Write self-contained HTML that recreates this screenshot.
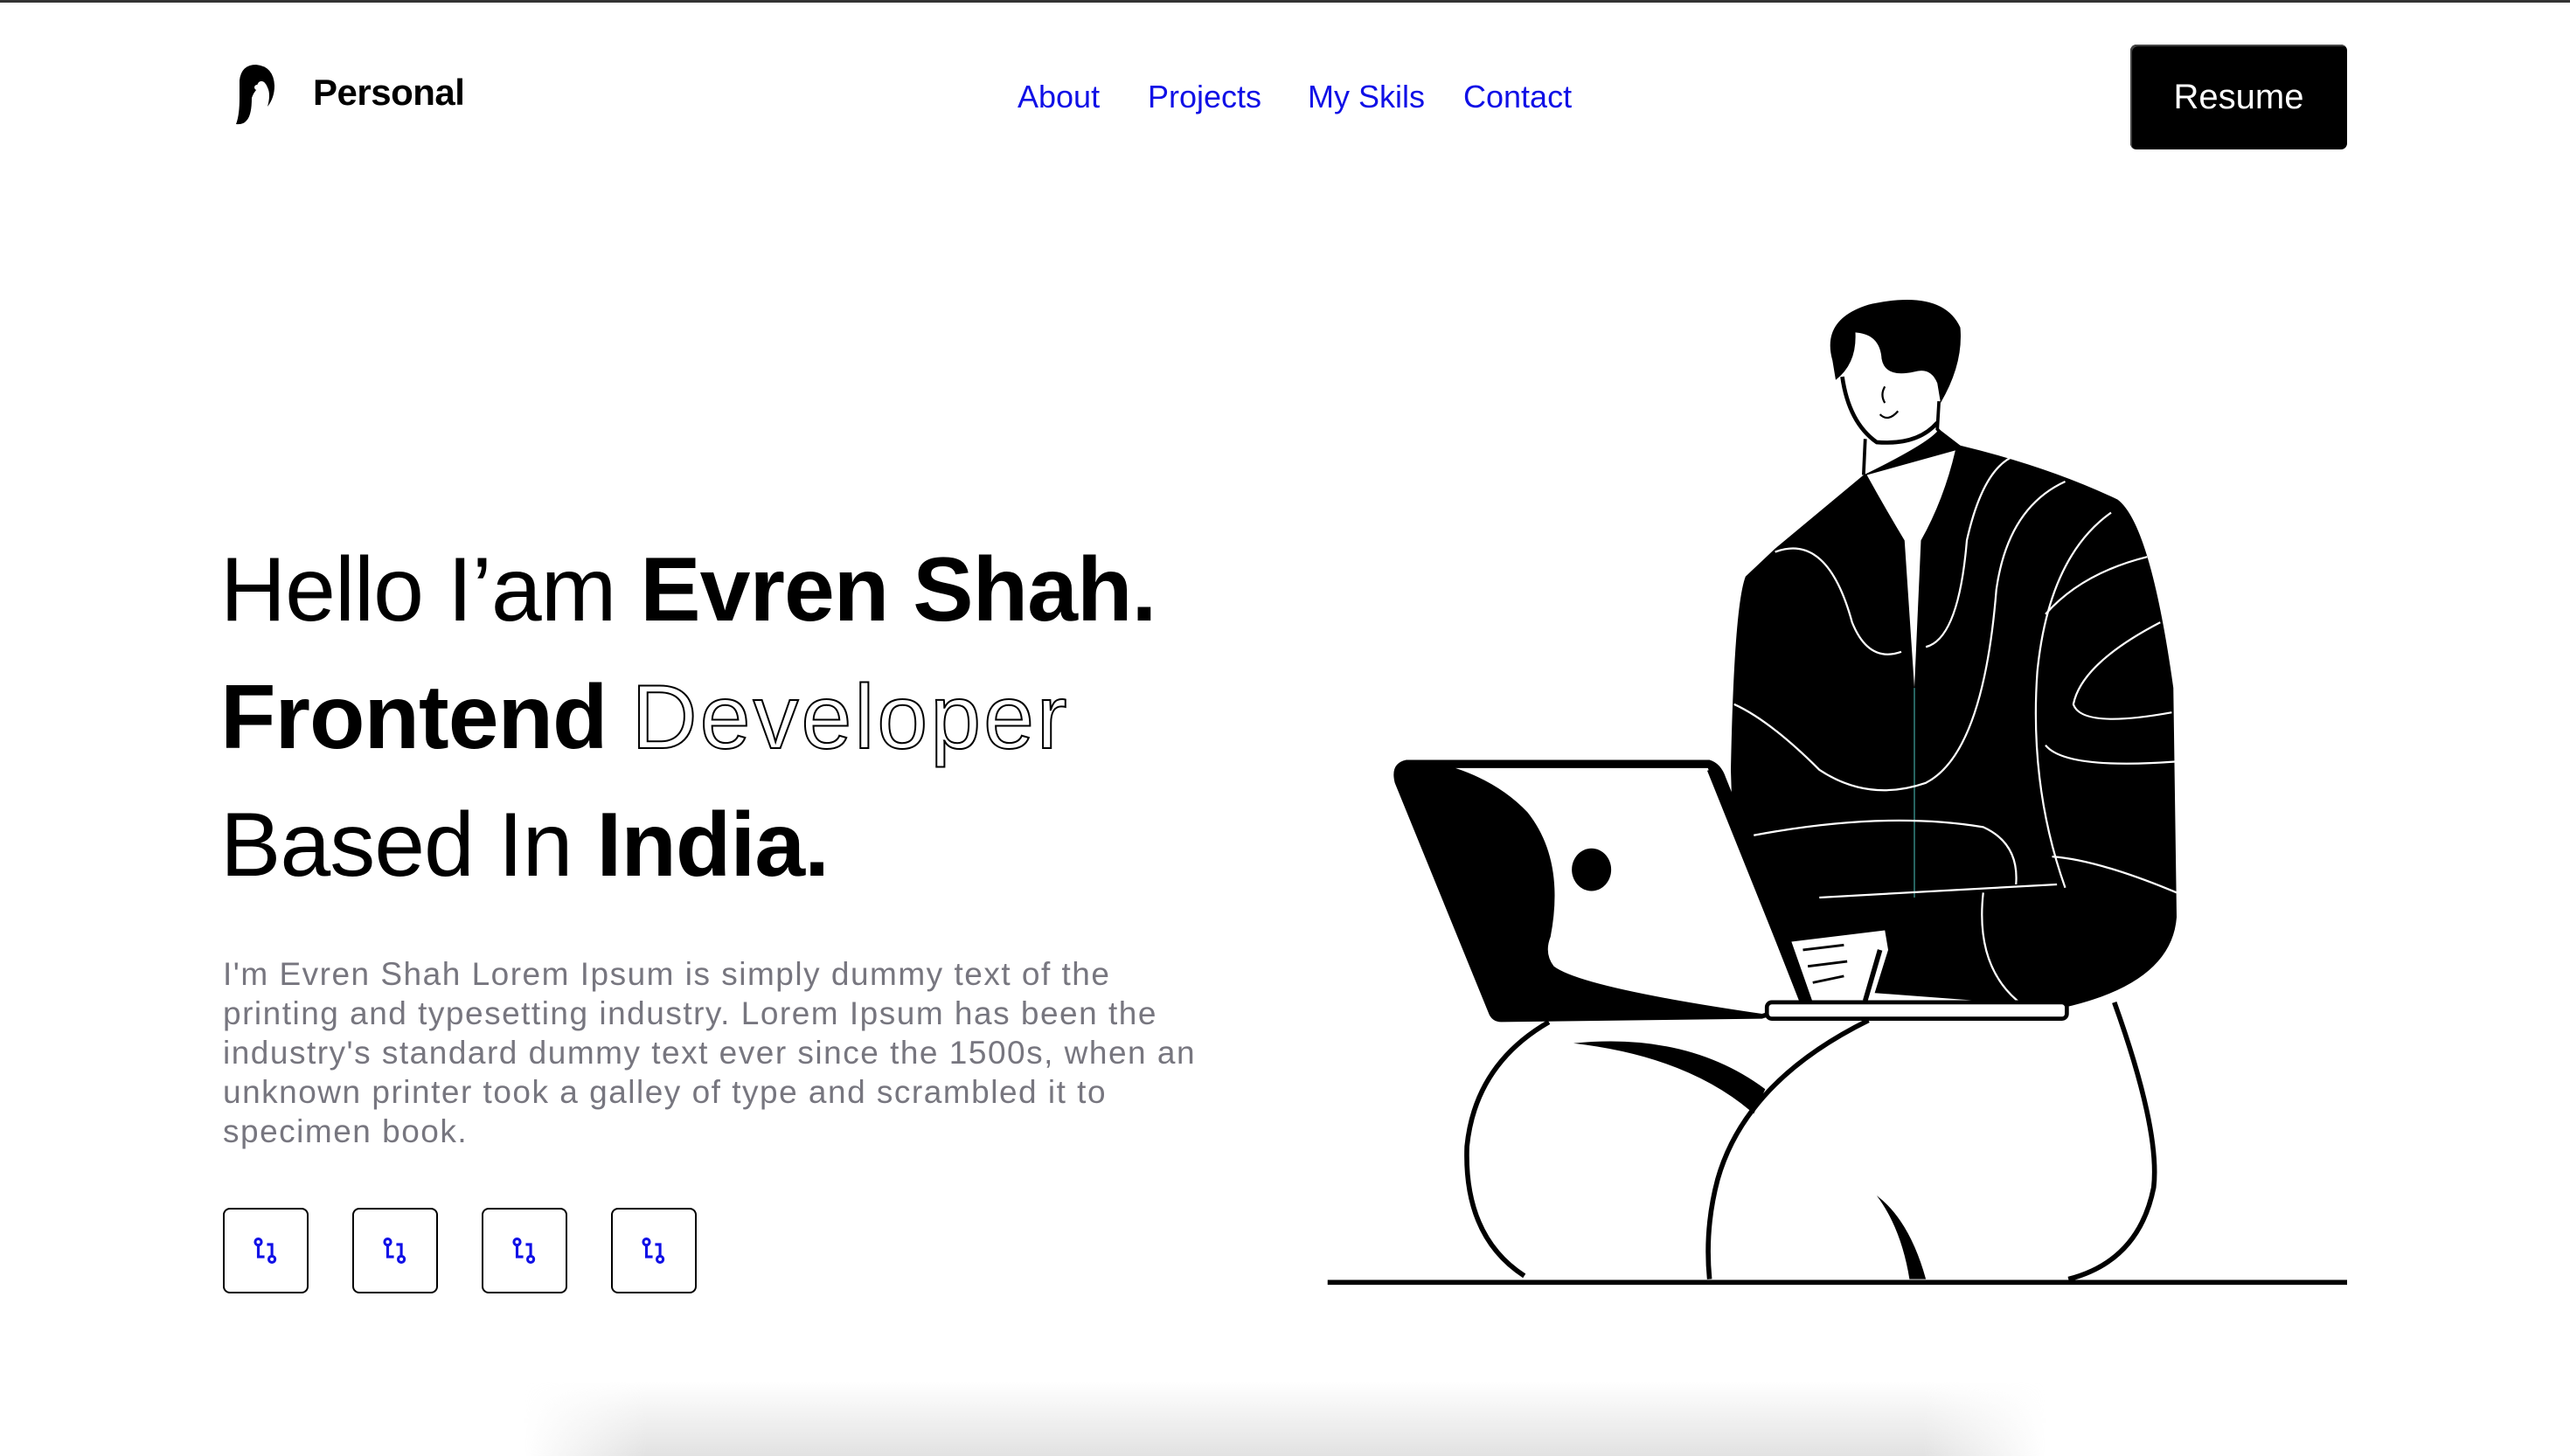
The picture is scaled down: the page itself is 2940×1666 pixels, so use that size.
<!DOCTYPE html>
<html><head><meta charset="utf-8"><style>
html,body{margin:0;padding:0;overflow:hidden;width:2940px;height:1666px;}
body{background:#fff;font-family:"Liberation Sans",sans-serif;}
#w{position:relative;width:2940px;height:1666px;overflow:hidden;}
.topline{position:absolute;left:0;top:0;width:2940px;height:3px;background:#333;}
.logo{position:absolute;left:358px;top:82px;font-size:42px;font-weight:bold;color:#000;letter-spacing:-0.5px;}
.nav a{position:absolute;top:90px;font-size:36px;color:#1010e6;text-decoration:none;}
.resume{position:absolute;left:2437px;top:51px;width:248px;height:120px;background:#000;border-radius:7px;box-shadow:inset 2px 2px 0 #444;color:#fff;font-size:40px;display:flex;align-items:center;justify-content:center;}
h1{position:absolute;left:252px;top:602px;margin:0;font-size:104px;line-height:146px;font-weight:normal;color:#000;letter-spacing:-1px;white-space:nowrap;}
h1 b{font-weight:bold;}
.out{color:#fff;-webkit-text-stroke:2px #000;letter-spacing:3px;}
p{position:absolute;left:255px;top:1092px;margin:0;font-size:37px;line-height:45px;color:#77767f;white-space:nowrap;letter-spacing:1.5px;}
.soc{position:absolute;top:1382px;width:98px;height:98px;border:2px solid #000;border-radius:8px;box-sizing:border-box;display:flex;align-items:center;justify-content:center;}
.shadow{position:absolute;left:600px;top:1580px;width:1740px;height:86px;background:linear-gradient(to bottom,rgba(220,220,220,0),#e2e2e2);-webkit-mask-image:linear-gradient(to right,transparent,#000 8%,#000 92%,transparent);mask-image:linear-gradient(to right,transparent,#000 8%,#000 92%,transparent);}
</style></head><body><div id="w">
<div class="topline"></div>
<svg style="position:absolute;left:268px;top:72px" width="50" height="72" viewBox="0 0 50 72">
<path d="M2,70 Q6,60 6,40 L6,20 Q8,2 25,2 Q45,4 46,26 Q46,40 38,50 Q42,36 38,28 Q34,18 28,22 Q24,28 26,30 Q22,34 20,40 Q20,60 14,66 Q10,71 2,70 Z" fill="#000"/>
<circle cx="26" cy="28" r="3" fill="#fff"/>
</svg>
<div class="logo">Personal</div>
<div class="nav"><a style="left:1164px">About</a><a style="left:1313px">Projects</a><a style="left:1496px">My Skils</a><a style="left:1674px">Contact</a></div>
<div class="resume">Resume</div>
<h1>Hello I’am <b>Evren Shah.</b><br><b>Frontend</b> <span class="out">Developer</span><br>Based In <b>India.</b></h1>
<p>I'm Evren Shah Lorem Ipsum is simply dummy text of the<br>printing and typesetting industry. Lorem Ipsum has been the<br>industry's standard dummy text ever since the 1500s, when an<br>unknown printer took a galley of type and scrambled it to<br>specimen book.</p>
<div class="soc" style="left:255px"><svg width="34" height="34" viewBox="0 0 24 24" fill="none" stroke="#1010e6" stroke-width="2.2"><circle cx="6" cy="5" r="2.5"/><path d="M6 8v9h5"/><circle cx="17" cy="19" r="2.5"/><path d="M17 16V7h-4"/></svg></div>
<div class="soc" style="left:403px"><svg width="34" height="34" viewBox="0 0 24 24" fill="none" stroke="#1010e6" stroke-width="2.2"><circle cx="6" cy="5" r="2.5"/><path d="M6 8v9h5"/><circle cx="17" cy="19" r="2.5"/><path d="M17 16V7h-4"/></svg></div>
<div class="soc" style="left:551px"><svg width="34" height="34" viewBox="0 0 24 24" fill="none" stroke="#1010e6" stroke-width="2.2"><circle cx="6" cy="5" r="2.5"/><path d="M6 8v9h5"/><circle cx="17" cy="19" r="2.5"/><path d="M17 16V7h-4"/></svg></div>
<div class="soc" style="left:699px"><svg width="34" height="34" viewBox="0 0 24 24" fill="none" stroke="#1010e6" stroke-width="2.2"><circle cx="6" cy="5" r="2.5"/><path d="M6 8v9h5"/><circle cx="17" cy="19" r="2.5"/><path d="M17 16V7h-4"/></svg></div>
<div class="shadow"></div>
<svg style="position:absolute;left:0;top:0" width="2940" height="1666" viewBox="0 0 1568 889" preserveAspectRatio="none">
<g fill="none" stroke="#000" stroke-width="3">
<path d="M945,624 Q900,650 895,700 Q893,755 930,779"/>
<path d="M1140,623 Q1065,660 1048,720 Q1040,750 1043,781"/>
<path d="M1290,612 Q1318,690 1314,725 Q1305,770 1262,781"/>
</g>
<path d="M960,637 Q1030,630 1077,665 L1070,680 Q1030,645 960,637 Z" fill="#000"/>
<path d="M1145,730 Q1165,745 1175,781 L1165,781 Q1160,750 1145,730 Z" fill="#000"/>
<path d="M1137,290 L1083,335 L1065,352 Q1058,370 1056,470 L1060,600 L1260,615 Q1325,600 1328,560 L1326,420 Q1312,320 1292,305 Q1250,285 1196,272 L1183,262 Q1178,270 1137,290 Z" fill="#000"/>
<path d="M1139,290 L1193,275 Q1186,305 1172,330 L1168,420 L1162,330 Q1150,310 1139,290 Z" fill="#fff"/>
<line x1="1168" y1="420" x2="1168" y2="548" stroke="#2a6a66" stroke-width="1"/>
<g fill="none" stroke="#fff" stroke-width="1.2">
<path d="M1083,337 Q1115,325 1130,380 Q1140,405 1160,398"/>
<path d="M1175,395 Q1195,390 1200,330 Q1210,285 1230,278"/>
<path d="M1058,430 Q1080,440 1110,470 Q1140,490 1175,478 Q1210,460 1218,360 Q1225,310 1260,294"/>
<path d="M1288,313 Q1250,340 1243,410 Q1238,480 1260,542"/>
<path d="M1070,510 Q1150,495 1210,505 Q1232,515 1230,540"/>
<path d="M1248,375 Q1270,350 1310,340"/>
<path d="M1318,380 Q1270,405 1265,430 Q1270,445 1325,435"/>
<path d="M1248,455 Q1260,470 1328,465"/>
<path d="M1252,523 Q1280,525 1328,545"/>
<path d="M1110,548 L1255,540"/>
<path d="M1210,545 Q1205,590 1232,612"/>
</g>
<path d="M1124,225 Q1128,258 1143,268 Q1170,276 1186,248 L1188,232 Q1178,222 1168,226 Q1150,230 1148,218 Q1146,205 1132,203 Q1130,222 1124,225 Z" fill="#fff"/>
<path d="M1118,220 Q1111,195 1140,186 Q1185,176 1196,200 Q1198,222 1184,246 L1182,234 Q1178,224 1168,227 Q1150,231 1148,219 Q1147,204 1132,203 Q1133,222 1120,232 Z" fill="#000"/>
<path d="M1124,230 Q1128,258 1145,270 Q1170,272 1182,258" fill="none" stroke="#000" stroke-width="2.5"/>
<path d="M1183,245 L1182,262 Q1188,270 1198,274" fill="none" stroke="#000" stroke-width="2"/>
<path d="M1138,268 L1137,290" stroke="#000" stroke-width="2"/>
<path d="M1147,253 Q1152,258 1158,251" fill="none" stroke="#000" stroke-width="1.2"/>
<path d="M1150,236 Q1147,241 1150,246" fill="none" stroke="#000" stroke-width="1.2"/>
<path d="M858,464 L1043,464 Q1050,466 1053,475 L1108,612 L1075,622 L916,624 Q910,624 908,618 L851,478 Q848,466 858,464 Z" fill="#000"/>
<path d="M888,469 L1042,469 L1098,612 L1075,619 Q965,603 948,590 Q942,582 946,572 Q955,525 932,496 Q915,478 888,469 Z" fill="#fff"/>
<ellipse cx="971" cy="531" rx="12" ry="13" fill="#000"/>
<path d="M1043,470 L1100,612" stroke="#000" stroke-width="3"/>
<path d="M1093,575 L1150,568 L1152,580 L1142,612 L1106,612 Z" fill="#fff"/>
<path d="M1147,580 L1138,611" stroke="#000" stroke-width="3"/>
<g stroke="#000" stroke-width="1.5"><line x1="1100" y1="580" x2="1125" y2="577"/><line x1="1103" y1="590" x2="1127" y2="587"/><line x1="1106" y1="600" x2="1125" y2="596"/></g>
<rect x="1078" y="612" width="183" height="10" rx="3" fill="#fff" stroke="#000" stroke-width="2.5"/>
<line x1="810" y1="783" x2="1432" y2="783" stroke="#000" stroke-width="3"/>
</svg>
</div></body></html>
